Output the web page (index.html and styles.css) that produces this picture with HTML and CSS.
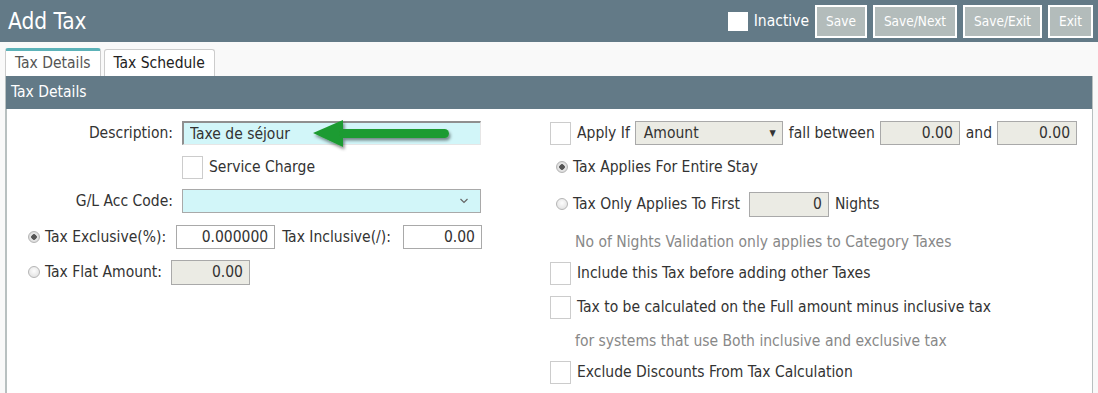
FILE: index.html
```html
<!DOCTYPE html>
<html lang="en">
<head>
    <meta charset="UTF-8">
    <meta name="viewport" content="width=device-width, initial-scale=1.0">
    <title>Add Tax</title>
    <link rel="stylesheet" href="styles.css">
</head>
<body>
    <div class="topbar">
        <h1>Add Tax</h1>
        <div class="actions">
            <span class="check white"></span>
            <span class="inactive">Inactive</span>
            <button class="btn">Save</button>
            <button class="btn">Save/Next</button>
            <button class="btn">Save/Exit</button>
            <button class="btn">Exit</button>
        </div>
    </div>

    <div class="page">
        <div class="tabs">
            <div class="tab active">Tax Details</div>
            <div class="tab">Tax Schedule</div>
        </div>

        <div class="panel">
            <div class="panel-head">Tax Details</div>
            <div class="panel-body">
                <div class="col left">
                    <div class="row">
                        <label class="lbl">Description:</label>
                        <div class="desc-wrap">
                            <input type="text" class="field desc" value="Taxe de séjour">
                            <svg class="arrow" width="160" height="40" viewBox="0 0 160 40">
                                <defs>
                                    <filter id="sh" x="-10%" y="-30%" width="130%" height="170%">
                                        <feDropShadow dx="1.5" dy="2.5" stdDeviation="1.5" flood-color="#000" flood-opacity="0.45"/>
                                    </filter>
                                </defs>
                                <g filter="url(#sh)" fill="#1e9b30">
                                    <polygon points="4,17 34,4 34,31"/>
                                    <rect x="30" y="13" width="110" height="9" rx="4.5"/>
                                </g>
                            </svg>
                        </div>
                    </div>
                    <div class="row">
                        <span class="spacer"></span>
                        <span class="check"></span>
                        <span class="txt">Service Charge</span>
                    </div>
                    <div class="row">
                        <label class="lbl">G/L Acc Code:</label>
                        <div class="field gl">
                            <svg width="10" height="6" viewBox="0 0 10 6"><path d="M1.5 1 L5 4.5 L8.5 1" fill="none" stroke="#666" stroke-width="1.2"/></svg>
                        </div>
                    </div>
                    <div class="row r-excl">
                        <span class="radio on"></span>
                        <span class="txt">Tax Exclusive(%):</span>
                        <input type="text" class="field num excl" value="0.000000">
                        <span class="txt incl-lbl">Tax Inclusive(/):</span>
                        <input type="text" class="field num incl" value="0.00">
                    </div>
                    <div class="row r-flat">
                        <span class="radio"></span>
                        <span class="txt">Tax Flat Amount:</span>
                        <input type="text" class="field num off flat" value="0.00">
                    </div>
                </div>

                <div class="col right">
                    <div class="row">
                        <span class="check"></span>
                        <span class="txt">Apply If</span>
                        <div class="field off sel">Amount <span class="caret">&#9660;</span></div>
                        <span class="txt">fall between</span>
                        <input type="text" class="field num off amt" value="0.00">
                        <span class="txt">and</span>
                        <input type="text" class="field num off amt" value="0.00">
                    </div>
                    <div class="row">
                        <span class="radio on"></span>
                        <span class="txt">Tax Applies For Entire Stay</span>
                    </div>
                    <div class="row r-first">
                        <span class="radio"></span>
                        <span class="txt">Tax Only Applies To First</span>
                        <input type="text" class="field num off nights" value="0">
                        <span class="txt">Nights</span>
                    </div>
                    <div class="row note r-note1">No of Nights Validation only applies to Category Taxes</div>
                    <div class="row r-tight">
                        <span class="check"></span>
                        <span class="txt">Include this Tax before adding other Taxes</span>
                    </div>
                    <div class="row">
                        <span class="check"></span>
                        <span class="txt">Tax to be calculated on the Full amount minus inclusive tax</span>
                    </div>
                    <div class="row note">for systems that use Both inclusive and exclusive tax</div>
                    <div class="row r-tight">
                        <span class="check"></span>
                        <span class="txt">Exclude Discounts From Tax Calculation</span>
                    </div>
                </div>
            </div>
        </div>
    </div>
</body>
</html>
```

FILE: styles.css
```css
* { box-sizing: border-box; }
body {
    margin: 0;
    font-family: "DejaVu Sans Condensed", "DejaVu Sans", sans-serif;
    font-size: 15.5px;
    color: #333;
    background: #f9f9f9;
}

.topbar {
    height: 42px;
    background: #637a87;
    display: flex;
    align-items: center;
    justify-content: space-between;
    padding: 0 5px 0 8px;
}
.topbar h1 {
    margin: 0;
    color: #fff;
    font-size: 22.5px;
    font-weight: normal;
}
.actions { display: flex; align-items: center; }
.actions .check { margin-right: 6px; }
.check.white { background: #fff; border-color: #fff; width: 20px; height: 19px; }
.inactive { color: #fff; font-size: 15.5px; margin-right: 6px; }
.btn {
    height: 33px;
    padding: 0 9px;
    margin-left: 6px;
    background: #b3bcbb;
    border: 2px solid #fff;
    color: #fff;
    font-family: inherit;
    font-size: 13.5px;
}
.btn:first-of-type { margin-left: 0; }

.page { padding: 6px 5px 0; }
.tabs { display: flex; gap: 3px; }
.tab {
    height: 27px;
    padding: 0 9px;
    line-height: 26px;
    font-size: 15.5px;
    background: #fff;
    border: 1px solid #ccc;
    border-bottom: none;
    border-radius: 3px 3px 0 0;
    color: #222;
    margin-top: 1px;
}
.tab.active {
    margin-top: 0;
    height: 28px;
    border-top: 3px solid #5cb2b8;
    color: #555;
    line-height: 25px;
    padding: 0 9px;
}

.panel {
    border: 1px solid #b8c0c0;
    border-left-width: 2px;
    border-top: none;
    background: #fff;
    height: 320px;
}
.panel-head {
    height: 33px;
    background: #637a87;
    color: #fff;
    font-size: 15.5px;
    line-height: 32px;
    padding-left: 5px;
    margin-left: -1px;
}
.panel-body { display: flex; padding-top: 12px; }
.col { display: flex; flex-direction: column; }
.left { width: 543px; }
.right { flex: 1; }

.row { display: flex; align-items: center; height: 24px; margin-top: 10px; }
.row:first-child { margin-top: 0; }
.r-excl { margin-top: 12px; }
.r-flat { margin-top: 11px; }
.r-first { margin-top: 13px; }
.r-note1 { margin-top: 14px; }
.r-tight { margin-top: 7px; }

.lbl { width: 166px; text-align: right; margin-right: 9px; }
.spacer { width: 175px; }
.txt { margin: 0 5px 0 6px; white-space: nowrap; }

.field {
    height: 24px;
    border: 1px solid #a9a9a9;
    background: #fff;
    font-family: inherit;
    font-size: 15.5px;
    color: #333;
    padding: 0 6px;
}
.desc-wrap { position: relative; }
.desc {
    width: 299px;
    background: #d2f6f9;
    border: none;
    border-top: 2px solid #8f8f8f;
    border-left: 2px solid #8f8f8f;
    border-bottom: 1px solid #e6e6e6;
    border-right: 1px solid #e6e6e6;
}
.arrow { position: absolute; left: 127px; top: -5px; pointer-events: none; }
.gl {
    width: 299px;
    background: #d2f6f9;
    display: flex;
    align-items: center;
    justify-content: flex-end;
    padding-right: 11px;
}
.num { text-align: right; }
.excl { width: 99px; margin-left: 5px; }
.incl-lbl { margin-left: 7px; }
.incl { width: 79px; margin-left: 7px; }
.flat { width: 79px; height: 25px; margin-left: 4px; }
.off { background: #ebebe4; border-color: #a9a9a9; }
.sel {
    width: 148px;
    display: flex;
    align-items: center;
    justify-content: space-between;
    padding: 0 6px 0 8px;
}
.caret { font-size: 9px; color: #333; }
.amt { width: 80px; }
.nights { width: 80px; height: 25px; margin-left: 4px; }

.check {
    display: inline-block;
    width: 21px;
    height: 23px;
    border: 1px solid #ccc;
    background: #fff;
}
.left .radio { margin-left: 21px; }
.right .radio { margin-left: 6px; }
.radio {
    display: inline-block;
    width: 12px;
    height: 12px;
    border-radius: 50%;
    border: 1px solid #b5b5b5;
    background: radial-gradient(circle at 50% 40%, #fdfdfd, #dcdcdc);
    margin-right: -1px;
}
.radio.on { background: radial-gradient(circle, #555 0, #555 2.5px, #e8e8e8 3px, #d5d5d5 6px); }
.note { color: #888; padding-left: 25px; }
```
